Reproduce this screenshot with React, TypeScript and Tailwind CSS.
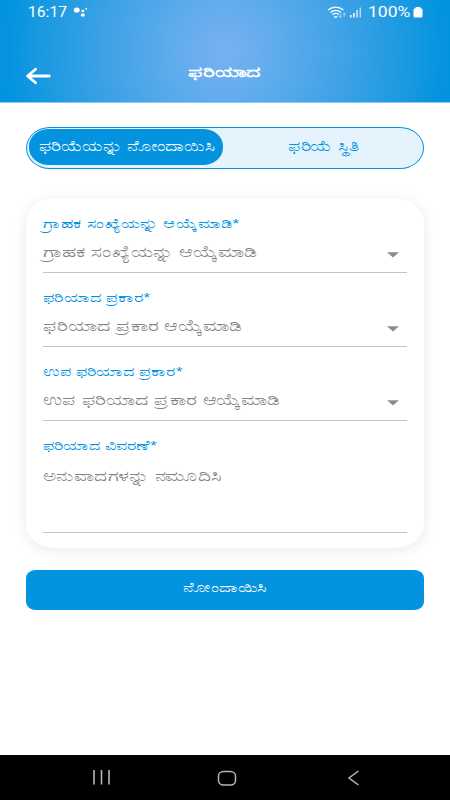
const fields = [
  {
    id: 1,
    label: "ಗ್ರಾಹಕ ಸಂಖ್ಯೆಯನ್ನು ಆಯ್ಕೆಮಾಡಿ*",
    placeholder: "ಗ್ರಾಹಕ ಸಂಖ್ಯೆಯನ್ನು ಆಯ್ಕೆಮಾಡಿ",
  },
  {
    id: 2,
    label: "ಫರಿಯಾದ ಪ್ರಕಾರ*",
    placeholder: "ಫರಿಯಾದ ಪ್ರಕಾರ ಆಯ್ಕೆಮಾಡಿ",
  },
  {
    id: 3,
    label: "ಉಪ ಫರಿಯಾದ ಪ್ರಕಾರ*",
    placeholder: "ಉಪ ಫರಿಯಾದ ಪ್ರಕಾರ ಆಯ್ಕೆಮಾಡಿ",
  },
];

const StatusBar = () => {
  return (
    <div className="flex h-6 items-center justify-between pl-7 pr-[27px] text-white">
      <div className="flex items-center">
        <span className="w-[45px] whitespace-nowrap">
          <span className="inline-block origin-left scale-x-[1.12] font-['Roboto'] text-[14px] leading-6">
            16:17
          </span>
        </span>
        <svg width="15" height="12" viewBox="0 0 15 12" fill="currentColor">
          <ellipse cx="3.7" cy="4" rx="3" ry="2.6" />
          <ellipse cx="9.8" cy="4.9" rx="1.5" ry="1.2" />
          <ellipse cx="9.8" cy="9" rx="2.1" ry="1.7" />
          <circle cx="13.2" cy="2.8" r="0.9" />
        </svg>
      </div>
      <div className="flex items-center">
        <svg width="20" height="13" viewBox="0 0 20 13" fill="none" stroke="currentColor" strokeWidth="1.3">
          <path d="M1 4Q8.7 -1.8 16.4 4" />
          <path d="M3.4 6.4Q8.7 2.4 14 6.4" />
          <path d="M5.6 8.6Q8.7 6 11.8 8.6" />
          <path d="M7.2 10.2L8.7 11.4L10.2 10.2" />
          <path d="M13.2 7.5v4m-1.5-1.4l1.5 1.4 1.5-1.4M17.2 11V7m-1.5 1.4L17.2 7l1.5 1.4" strokeWidth="0.7" opacity="0.7" />
        </svg>
        <svg className="ml-[3px]" width="12" height="11" viewBox="0 0 12 11" fill="currentColor">
          <path d="M0 8h1.5v2.5H0z" />
          <path d="M3.2 6h1.5v4.5H3.2z" />
          <path d="M6.3 3h1.5v7.5H6.3z" opacity="0.8" />
          <path d="M9.6 0.5h1.3v10H9.6z" opacity="0.7" />
        </svg>
        <span className="ml-[6px] w-[45px] whitespace-nowrap">
          <span className="inline-block origin-left scale-x-[1.25] font-['Roboto'] text-[14px] leading-6">
            100%
          </span>
        </span>
        <svg width="10" height="11" viewBox="0 0 10 11" fill="currentColor">
          <rect x="2.5" y="0" width="5" height="3" rx="0.8" />
          <rect x="0.5" y="1.2" width="9" height="9.3" rx="1.6" />
        </svg>
      </div>
    </div>
  );
};

const Header = () => {
  return (
    <header className="h-[102px] bg-[radial-gradient(circle_at_50%_50%,#79b1f0_0px,#5cabeb_60px,#3ca1e6_125px,#1c9ae1_180px,#0393df_220px)] shadow-[0_1px_0_#8dcbf1]">
      <StatusBar />
      <div className="grid grid-cols-[26px_1fr_50px] pt-[36px]">
        <div className="relative h-8">
          <svg className="absolute left-[25px] top-[7px]" width="27" height="18" viewBox="0 0 27 18" fill="none" stroke="white" strokeWidth="2.8" strokeLinecap="round" strokeLinejoin="round">
            <path d="M24.3 9H3M10.6 2.2L2.6 9l8 6.8" />
          </svg>
        </div>
        <h1 className="pl-[23px] text-center text-[14.5px] font-bold leading-6 text-white">
          <span className="inline-block scale-x-[1.5]">ಫರಿಯಾದ</span>
        </h1>
      </div>
    </header>
  );
};

const Tabs = () => {
  return (
    <div className="flex h-[42px] rounded-[24px/21px] border border-[#0393df] bg-[#e5f3fc] text-[14px]">
      <button className="ml-[2px] mt-[1px] flex h-9 w-[194px] justify-center whitespace-nowrap rounded-[20px/17px] bg-[#0393df] leading-[34px] text-white">
        <span className="inline-block scale-x-[1.36]">ಫರಿಯೆಯನ್ನು ನೋಂದಾಯಿಸಿ</span>
      </button>
      <button className="flex flex-1 justify-center whitespace-nowrap leading-[36px] text-[#0393df]">
        <span className="inline-block scale-x-[1.38]">ಫರಿಯೆ ಸ್ಥಿತಿ</span>
      </button>
    </div>
  );
};

const Form = () => {
  return (
    <div className="mt-[29px] h-[350px] rounded-[28px/24px] bg-white px-[17px] shadow-[0_2px_14px_rgba(0,0,0,0.09)]">
      {fields.map((field) => (
        <div className="h-[74px] border-b border-[#c4c4c4] first:h-[75px] first:pt-px" key={field.id}>
          <label className="block h-[37px] whitespace-nowrap pt-[13px] text-[13px] leading-6 text-[#0393df]">
            <span className="inline-block origin-left scale-x-[1.38]">{field.label}</span>
          </label>
          <div className="flex items-center justify-between whitespace-nowrap pr-2 pt-1 text-[14.5px] leading-6 text-[#858585]">
            <span className="inline-block origin-left scale-x-[1.375]">{field.placeholder}</span>
            <svg className="mt-[5px]" width="12" height="6" viewBox="0 0 12 6" fill="#8a8c8f">
              <path d="M0 0.3h12L6 5.5z" />
            </svg>
          </div>
        </div>
      ))}
      <div className="h-[112px] border-b border-[#c4c4c4]">
        <label className="block h-[37px] whitespace-nowrap pt-[13px] text-[13px] leading-6 text-[#0393df]">
          <span className="inline-block origin-left scale-x-[1.36]">ಫರಿಯಾದ ವಿವರಣೆ*</span>
        </label>
        <p className="whitespace-nowrap pt-[6px] text-[14.5px] leading-6 text-[#858585]">
          <span className="inline-block origin-left scale-x-[1.345]">ಅನುವಾದಗಳನ್ನು ನಮೂದಿಸಿ</span>
        </p>
      </div>
    </div>
  );
};

const NavBar = () => {
  return (
    <nav className="flex h-[45px] items-center bg-black pl-[92px] text-[#b5b5b5]">
      <svg width="19" height="15" viewBox="0 0 19 15" fill="none" stroke="currentColor" strokeWidth="1.6">
        <path d="M2 0v14.5M9.5 0v14.5M17 0v14.5" />
      </svg>
      <svg className="ml-[106px]" width="20" height="16" viewBox="0 0 20 16" fill="none" stroke="currentColor" strokeWidth="1.5">
        <rect x="1.5" y="1.5" width="17" height="13.5" rx="5" ry="4.5" />
      </svg>
      <svg className="ml-[111px]" width="12" height="16" viewBox="0 0 12 16" fill="none" stroke="currentColor" strokeWidth="1.5">
        <path d="M10.5 1L1 8l9.5 7" />
      </svg>
    </nav>
  );
};

const App = () => {
  return (
    <div className="flex h-[800px] w-[450px] flex-col overflow-hidden bg-white font-['Liberation_Sans',sans-serif]">
      <Header />
      <main className="flex-1 px-[26px] pt-[25px]">
        <Tabs />
        <Form />
        <button className="mt-[22px] flex h-10 w-full justify-center rounded-[10px/8px] bg-[#0393df] text-[13px] leading-[36px] text-white">
          <span className="inline-block scale-x-[1.4]">ನೋಂದಾಯಿಸಿ</span>
        </button>
      </main>
      <NavBar />
    </div>
  );
};

export default App;
